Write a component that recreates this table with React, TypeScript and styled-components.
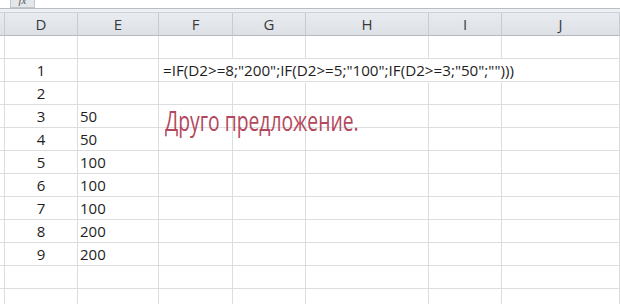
import React from 'react';
import styled, { createGlobalStyle } from 'styled-components';

const GlobalStyle = createGlobalStyle`
  html, body {
    margin: 0;
    padding: 0;
    background: #ffffff;
    overflow: hidden;
  }
  body {
    font-family: "Open Sans", "Noto Sans", sans-serif;
    color: #1e1e1e;
  }
`;

const Screen = styled.div`
  position: relative;
  width: 620px;
  height: 304px;
  overflow: hidden;
  background: #ffffff;
`;

const FormulaStrip = styled.div`
  height: 8px;
  display: flex;
  border-bottom: 1px solid #b9bec5;
`;

const FxTab = styled.div`
  width: 25px;
  height: 8px;
  margin-left: 10px;
  box-sizing: border-box;
  background: #e4e7ea;
  border: 1px solid #c2c6cb;
  border-top: none;
  overflow: hidden;
  display: flex;
  justify-content: center;
`;

const FxLabel = styled.span`
  font-family: "Liberation Serif", serif;
  font-style: italic;
  font-size: 11px;
  line-height: 11px;
  color: #555;
  transform: translateY(-5px);
`;

const Band = styled.div`
  height: 3px;
  background: #eef0f2;
`;

const columns = '5px 73px 81px 74px 73px 123px 73px 1fr';

const HeaderRow = styled.div`
  display: grid;
  grid-template-columns: ${columns};
  height: 24px;
  background: linear-gradient(#e8ebef, #dde1e6);
  border-top: 1px solid #cdd2d8;
  box-sizing: border-box;
`;

const HeaderCell = styled.div`
  display: flex;
  align-items: center;
  justify-content: center;
  border-right: 1px solid #c7ccd3;
  border-bottom: 1px solid #b4bac2;
  font-size: 15px;
  color: #3a3a3a;
`;

const Body = styled.div`
  display: grid;
  grid-template-columns: ${columns};
  grid-auto-rows: 23px;
`;

const Cell = styled.div<{ $align?: 'center' | 'left'; $spill?: boolean }>`
  position: relative;
  display: flex;
  align-items: center;
  justify-content: ${({ $align }) => ($align === 'center' ? 'center' : 'flex-start')};
  padding-left: ${({ $align }) => ($align === 'left' ? '2px' : '0')};
  border-bottom: 1px solid #dcdee0;
  border-right: 1px solid ${({ $spill }) => ($spill ? 'transparent' : '#dcdee0')};
  font-size: 15px;
  white-space: nowrap;
  overflow: ${({ $spill }) => ($spill ? 'visible' : 'hidden')};
  z-index: ${({ $spill }) => ($spill ? 1 : 0)};
`;

const FormulaText = styled.span`
  position: relative;
  left: 2px;
  font-size: 15.2px;
  color: #1e1e1e;
`;

const Note = styled.div`
  position: absolute;
  left: 165px;
  top: 101px;
  font-family: "Open Sans", "Noto Sans", sans-serif;
  font-size: 28px;
  color: #b3475b;
  white-space: nowrap;
  transform: scaleX(0.69);
  transform-origin: left top;
`;

const headers = ['', 'D', 'E', 'F', 'G', 'H', 'I', 'J'];

const rows: { n: string; e: string }[] = [
  { n: '', e: '' },
  { n: '1', e: '' },
  { n: '2', e: '' },
  { n: '3', e: '50' },
  { n: '4', e: '50' },
  { n: '5', e: '100' },
  { n: '6', e: '100' },
  { n: '7', e: '100' },
  { n: '8', e: '200' },
  { n: '9', e: '200' },
  { n: '', e: '' },
  { n: '', e: '' },
];

const formula = '=IF(D2>=8;"200";IF(D2>=5;"100";IF(D2>=3;"50";"")))';

export default function App() {
  return (
    <Screen>
      <GlobalStyle />
      <FormulaStrip>
        <FxTab>
          <FxLabel>fx</FxLabel>
        </FxTab>
      </FormulaStrip>
      <Band />
      <HeaderRow>
        {headers.map((h, i) => (
          <HeaderCell key={i}>{h}</HeaderCell>
        ))}
      </HeaderRow>
      <Body>
        {rows.map((r, i) => {
          const spill = r.n === '1';
          return (
            <React.Fragment key={i}>
              <Cell />
              <Cell $align="center">{r.n}</Cell>
              <Cell $align="left">{r.e}</Cell>
              <Cell $align="left" $spill={spill}>
                {spill && <FormulaText>{formula}</FormulaText>}
              </Cell>
              <Cell $spill={spill} />
              <Cell $spill={spill} />
              <Cell $spill={spill} />
              <Cell />
            </React.Fragment>
          );
        })}
      </Body>
      <Note>Друго предложение.</Note>
    </Screen>
  );
}
